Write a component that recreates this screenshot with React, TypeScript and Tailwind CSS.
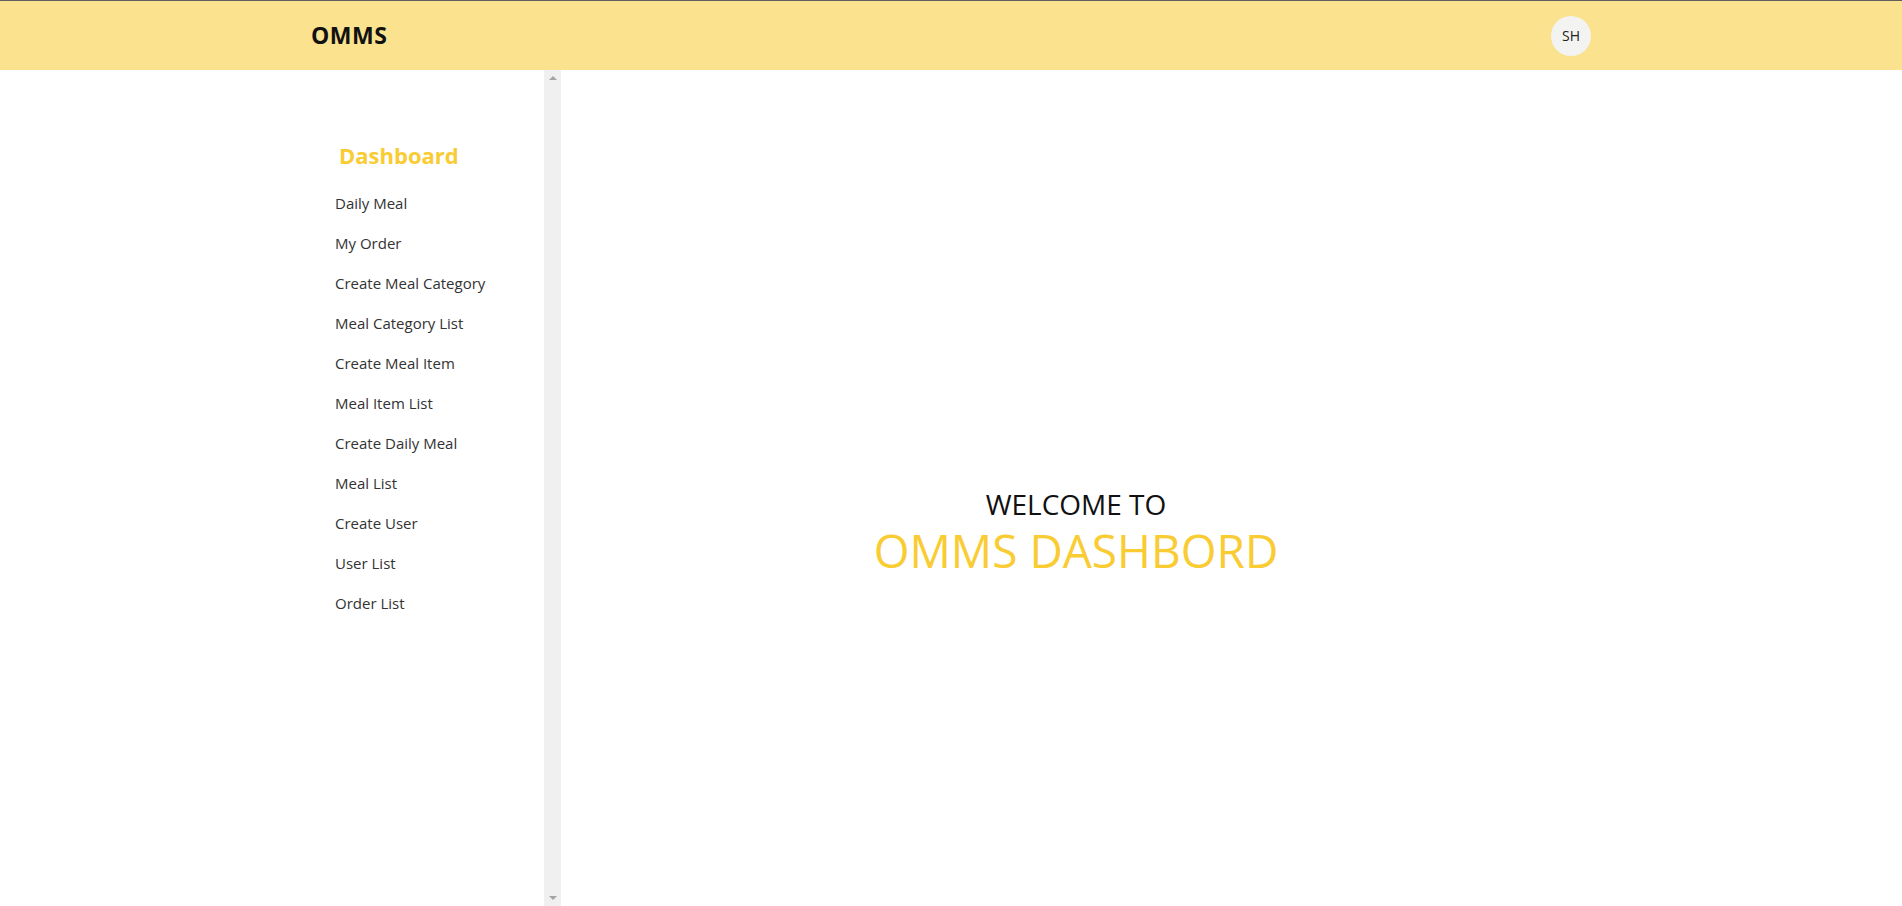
const MENU = [
  'Daily Meal',
  'My Order',
  'Create Meal Category',
  'Meal Category List',
  'Create Meal Item',
  'Meal Item List',
  'Create Daily Meal',
  'Meal List',
  'Create User',
  'User List',
  'Order List',
]

function FakeScrollbar() {
  return (
    <div className="w-[17px] shrink-0 bg-[#f0f0f0] flex flex-col items-center justify-between py-[6px]">
      <div className="w-0 h-0 border-l-[4px] border-r-[4px] border-b-[4px] border-l-transparent border-r-transparent border-b-[#a3a3a3]" />
      <div className="w-0 h-0 border-l-[4px] border-r-[4px] border-t-[4px] border-l-transparent border-r-transparent border-t-[#a3a3a3]" />
    </div>
  )
}

export default function App() {
  return (
    <div className="h-screen flex flex-col bg-white font-['Open_Sans','Noto_Sans',sans-serif] overflow-hidden">
      <header className="h-[70px] shrink-0 bg-[#fae28e] border-t border-[#5f5f5f]">
        <div className="w-[1280px] mx-auto h-full flex items-center justify-between">
          <span className="text-[23px] font-bold text-[#111] tracking-[0.5px]">OMMS</span>
          <div className="w-10 h-10 rounded-full bg-[#f3f3f1] flex items-center justify-center text-[14px] text-[#222]">
            SH
          </div>
        </div>
      </header>

      <div className="flex-1 min-h-0 w-[1280px] mx-auto flex">
        <aside className="w-[250px] shrink-0 flex">
          <div className="flex-1 pt-[70px]">
            <h2 className="pl-[28px] text-[22px] leading-[31px] font-bold text-[#f9cc34] mb-[12px]">Dashboard</h2>
            <ul>
              {MENU.map(item => (
                <li key={item} className="pl-[24px] h-[40px] flex items-center text-[15px] text-[#333]">
                  {item}
                </li>
              ))}
            </ul>
          </div>
          <FakeScrollbar />
        </aside>

        <main className="flex-1 flex flex-col items-center pt-[415px]">
          <p className="text-[28px] leading-[38px] text-[#111]">WELCOME TO</p>
          <p className="text-[46px] leading-[54px] text-[#f9cc34]">OMMS DASHBORD</p>
        </main>
      </div>
    </div>
  )
}
